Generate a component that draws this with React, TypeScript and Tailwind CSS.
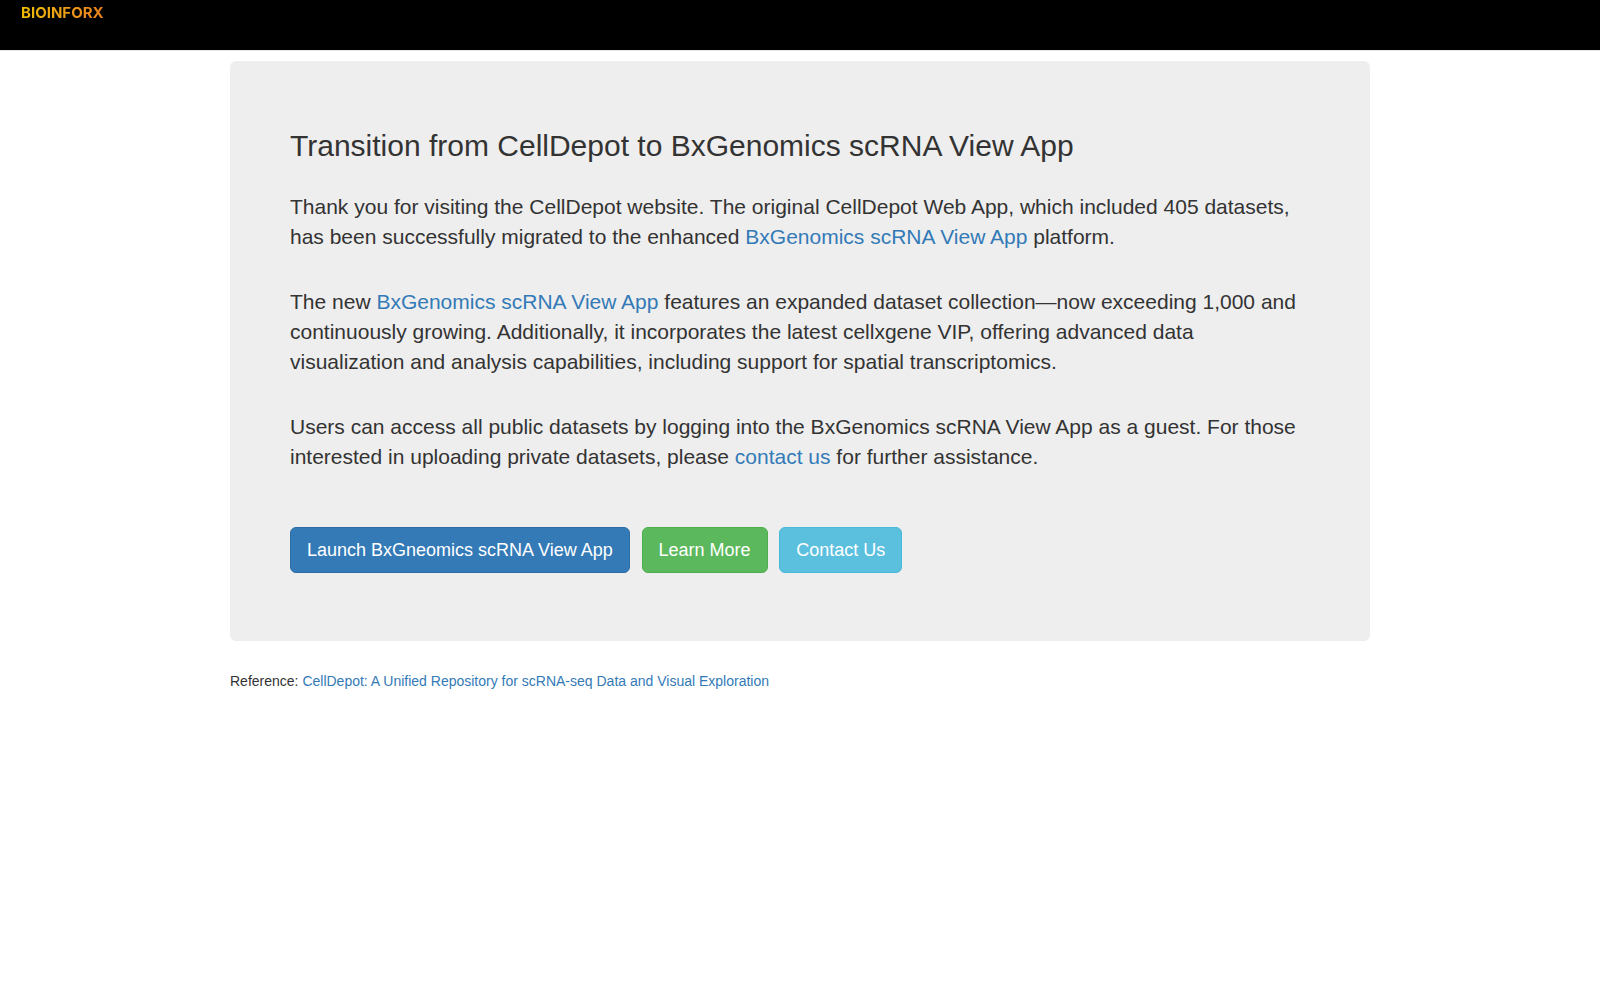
import React from "react";

const APP_URL = "#bxgenomics";
const link = "text-[#337ab7] hover:text-[#23527c] hover:underline";
const paragraph = "mb-[35px] text-[21px] leading-[30px] font-light";
const button = "inline-block rounded-md border px-4 py-[10px] align-middle text-[18px] leading-6 text-white";

function Logo() {
  return (
    <a
      href="#home"
      className="inline-block bg-linear-to-r from-[#ecbc00] to-[#ea8020] bg-clip-text align-top font-[Inter,sans-serif] text-[15px] leading-[18px] font-bold text-transparent"
    >
      BIOINFORX
    </a>
  );
}

export default function App() {
  return (
    <div className="min-h-screen bg-white font-['Liberation_Sans',Arial,sans-serif] text-sm leading-5 text-[#333]">
      <header className="h-[51px] border-b border-[#e7e7e7] bg-black px-[21px] py-1">
        <Logo />
      </header>
      <main className="mx-auto mt-[10px] max-w-[1170px] px-[15px]">
        <section className="mb-[30px] rounded-md bg-[#eee] px-[60px] py-[68px]">
          <h1 className="mb-[30px] text-[30px] leading-[33px] font-medium">Transition from CellDepot to BxGenomics scRNA View App</h1>
          <p className={paragraph}>
            Thank you for visiting the CellDepot website. The original CellDepot Web App, which included 405 datasets, has been successfully migrated to the enhanced <a href={APP_URL} className={link}>BxGenomics scRNA View App</a> platform.
          </p>
          <p className={paragraph}>
            The new <a href={APP_URL} className={link}>BxGenomics scRNA View App</a> features an expanded dataset collection—now exceeding 1,000 and continuously growing. Additionally, it incorporates the latest cellxgene VIP, offering advanced data visualization and analysis capabilities, including support for spatial transcriptomics.
          </p>
          <p className={paragraph}>
            Users can access all public datasets by logging into the BxGenomics scRNA View App as a guest. For those interested in uploading private datasets, please <a href="#contact" className={link}>contact us</a> for further assistance.
          </p>
          <div className="mt-[55px] text-[21px] leading-[30px]">
            <a href={APP_URL} role="button" className={`${button} border-[#2e6da4] bg-[#337ab7]`}>Launch BxGneomics scRNA View App</a>
            {"\u00a0 "}
            <a href="#learn" role="button" className={`${button} border-[#4cae4c] bg-[#5cb85c]`}>Learn More</a>
            {"\u00a0 "}
            <a href="#contact" role="button" className={`${button} border-[#46b8da] bg-[#5bc0de]`}>Contact Us</a>
          </div>
        </section>
        <p>Reference: <a href="#reference" className={link}>CellDepot: A Unified Repository for scRNA-seq Data and Visual Exploration</a></p>
      </main>
    </div>
  );
}
